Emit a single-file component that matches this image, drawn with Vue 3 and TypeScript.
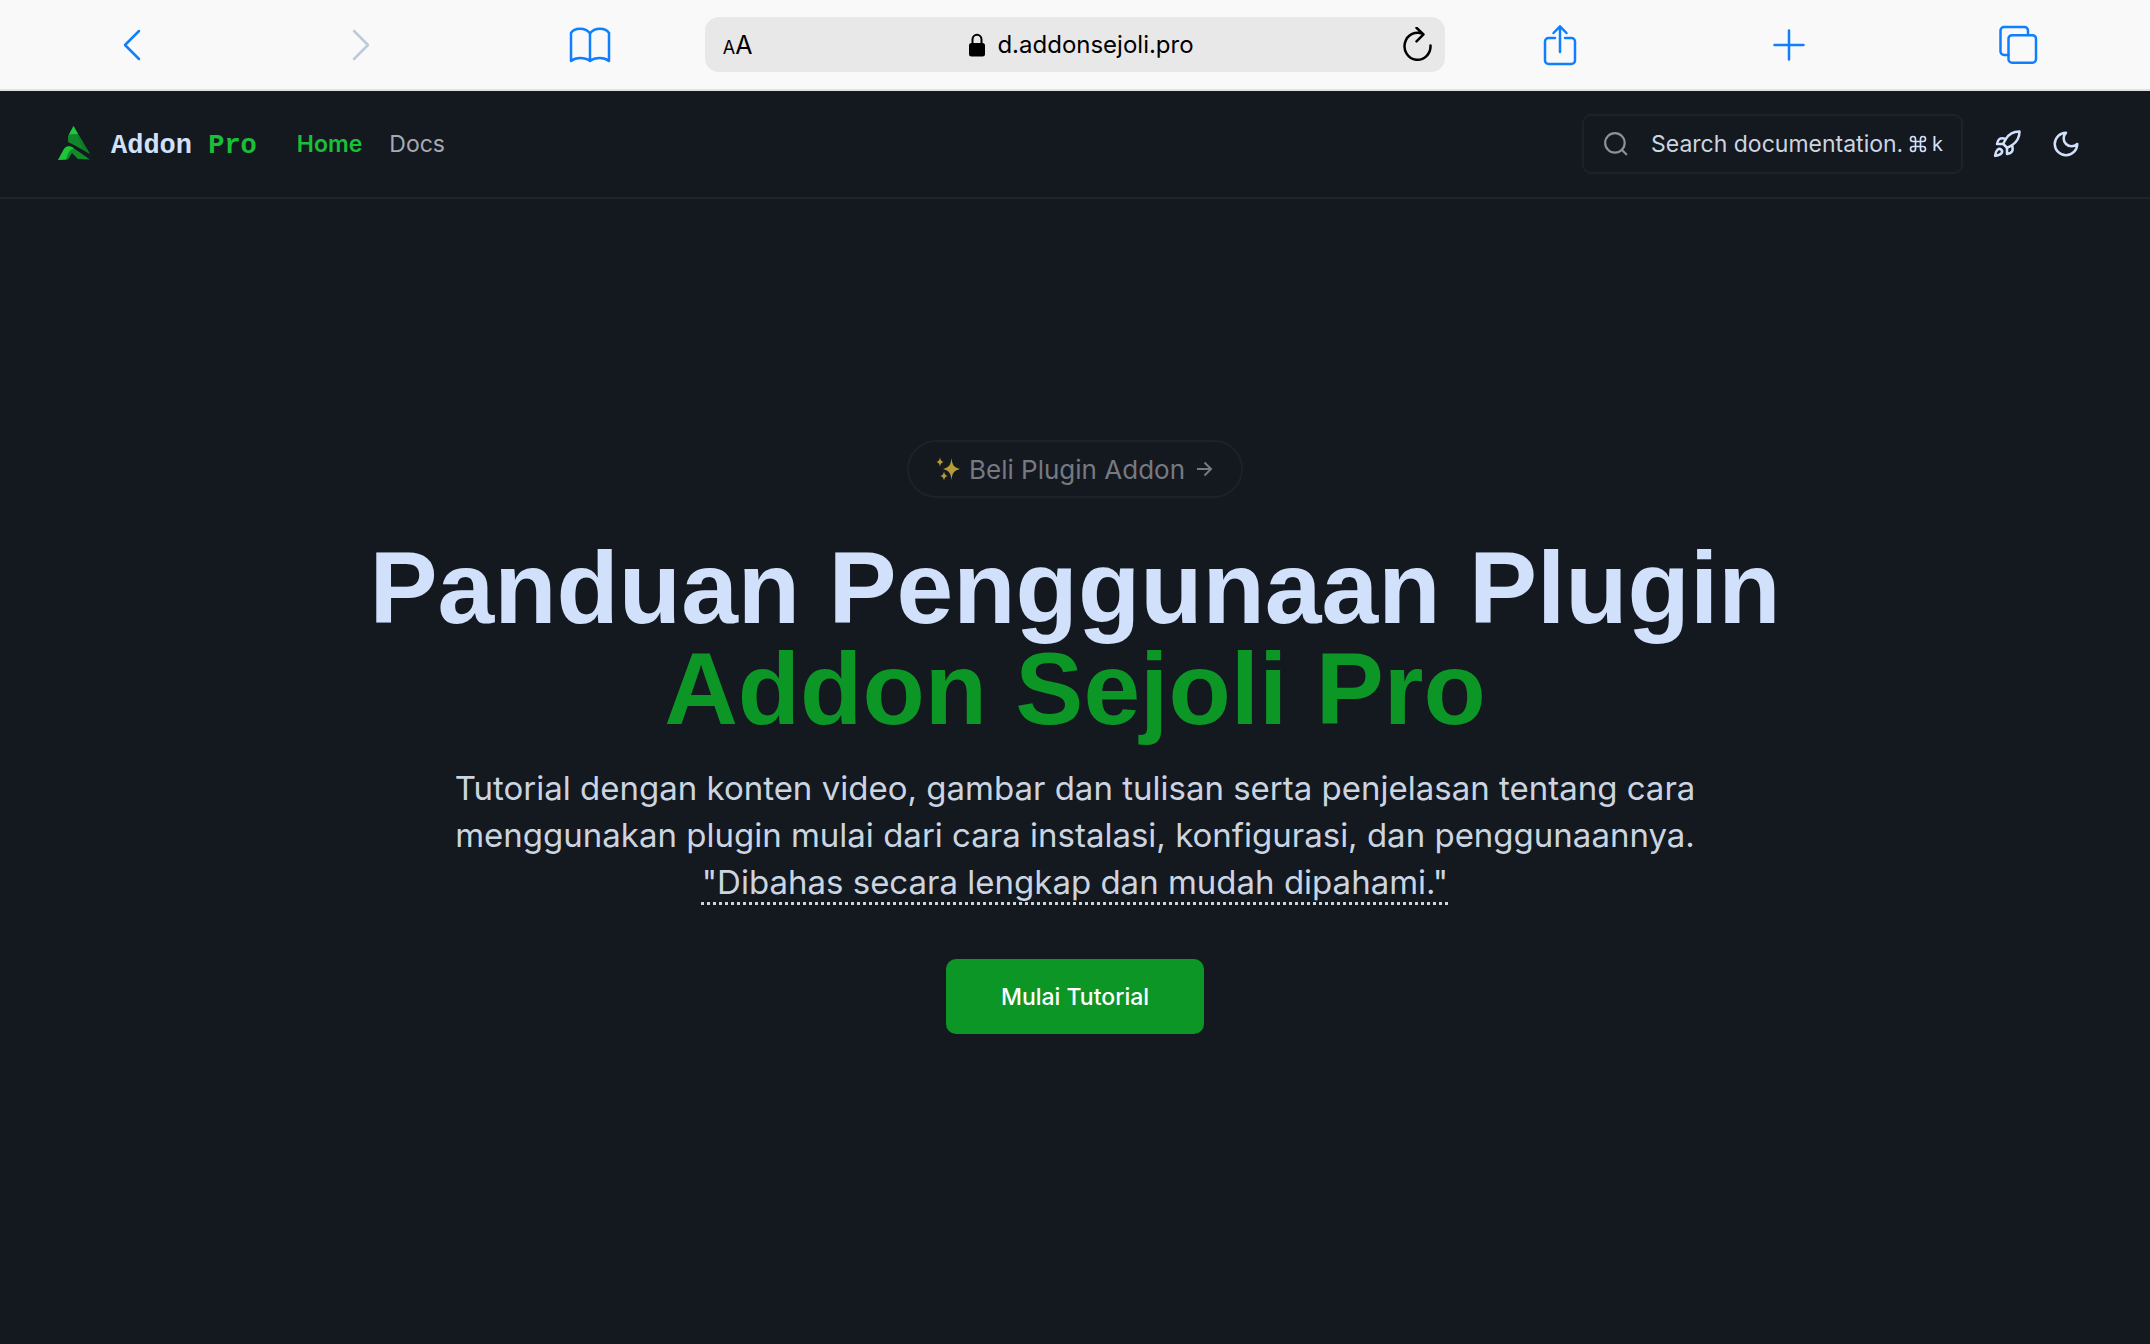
<script setup lang="ts">
interface NavLink {
  label: string
  href: string
  active: boolean
}

const links: NavLink[] = [
  { label: 'Home', href: '#home', active: true },
  { label: 'Docs', href: '#docs', active: false },
]
</script>

<template>
  <div class="browser">
    <div class="toolbar">
      <button class="tool" aria-label="Back">
        <svg width="20" height="34" viewBox="0 0 20 34"><path d="M17 3 3 17l14 14" /></svg>
      </button>
      <button class="tool muted" aria-label="Forward">
        <svg width="20" height="34" viewBox="0 0 20 34"><path d="m3 3 14 14L3 31" /></svg>
      </button>
      <button class="tool" aria-label="Bookmarks">
        <svg width="42" height="36" viewBox="0 0 42 36">
          <path d="M21 6.500C18.500 3 15 1.800 11 1.800S3.500 3.500 2 6v28c2.500-2 5.500-3 9-3s7.500 1 10 3c2.500-2 6.500-3 10-3s6.500 1 9 3V6c-1.500-2.500-5-4.200-9-4.200S23.500 3 21 6.500zV34" />
        </svg>
      </button>
      <div class="address">
        <button class="reader" aria-label="Page settings"><small>A</small>A</button>
        <div class="site">
          <svg width="18" height="24" viewBox="0 0 18 24">
            <rect x="1" y="10" width="16" height="13.500" rx="2.500" fill="#000" />
            <path d="M4.500 11V6.500a4.500 4.800 0 0 1 9 0V11" fill="none" stroke="#000" stroke-width="2" />
          </svg>
          <span>d.addonsejoli.pro</span>
        </div>
        <button class="reload" aria-label="Reload">
          <svg width="30" height="36" viewBox="0 0 30 36">
            <path d="M27.500 18.500A13 13.500 0 1 1 20 7M13.500 .800l7 6.500-7 7" />
          </svg>
        </button>
      </div>
      <button class="tool" aria-label="Share">
        <svg width="34" height="42" viewBox="0 0 34 42">
          <path d="M12 14H5.500A3.500 3.500 0 0 0 2 17.500v19A3.500 3.500 0 0 0 5.500 40h23a3.500 3.500 0 0 0 3.500-3.500v-19a3.500 3.500 0 0 0-3.500-3.500H22M17 28V2.500M10.500 9 17 2.300 23.500 9" />
        </svg>
      </button>
      <button class="tool" aria-label="New tab">
        <svg width="32" height="32" viewBox="0 0 32 32"><path d="M16 1.500v29M1.500 16h29" /></svg>
      </button>
      <button class="tool" aria-label="Show tabs">
        <svg width="40" height="40" viewBox="0 0 40 40">
          <path d="M10.500 30H6a3.500 3.500 0 0 1-3.500-3.500v-21A3.500 3.500 0 0 1 6 2h20.500A3.500 3.500 0 0 1 30 5.500V10" />
          <rect x="10.500" y="10.200" width="27.500" height="27.500" rx="3.500" />
        </svg>
      </button>
    </div>

    <header class="header">
      <a class="brand" href="#home">
        <svg width="34" height="36" viewBox="0 0 34 36">
          <path d="M16.500 0 11 10v6l6 3L33 28z" fill="#12862a" />
          <path d="M16.500 0 12 8.500l9-.5z" fill="#1cc93a" />
          <path d="M20 8 33 28l-7-5z" fill="#0f7a25" />
          <path d="M1 34 7 23c2-3 5-3.500 8-2l18 12.500-12-.500-6-6-4 6.500z" fill="#118a29" />
          <path d="M1 34 7 23c2-3 5-3.500 8-2l2 1.500c-5 1-6 5-8 11z" fill="#1bc638" />
        </svg>
        <span class="brand-name">Addon <span class="green">Pro</span></span>
      </a>
      <nav class="nav">
        <a v-for="link in links" :key="link.label" :href="link.href" :class="{ active: link.active }">{{ link.label }}</a>
      </nav>
      <div class="tools">
        <label class="search">
          <svg width="26" height="26" viewBox="0 0 24 24"><circle cx="11" cy="11" r="9" /><path d="m21.500 21.500-4-4" /></svg>
          <input type="text" placeholder="Search documentation." aria-label="Search documentation" />
          <kbd>
            <svg width="20" height="20" viewBox="0 0 24 24"><path d="M15 6v12a3 3 0 1 0 3-3H6a3 3 0 1 0 3 3V6a3 3 0 1 0-3 3h12a3 3 0 1 0-3-3" /></svg>
            <span>k</span>
          </kbd>
        </label>
        <button class="icon" aria-label="Launch">
          <svg width="30" height="30" viewBox="0 0 24 24">
            <path d="M4.500 16.500c-1.500 1.260-2 5-2 5s3.740-.500 5-2c.710-.840.700-2.130-.090-2.910a2.180 2.180 0 0 0-2.910-.090z" />
            <path d="m12 15-3-3a22 22 0 0 1 2-3.950A12.880 12.880 0 0 1 22 2c0 2.720-.780 7.500-6 11a22.350 22.350 0 0 1-4 2z" />
            <path d="M9 12H4s.550-3.030 2-4c1.620-1.080 5 0 5 0M12 15v5s3.030-.550 4-2c1.080-1.620 0-5 0-5" />
          </svg>
        </button>
        <button class="icon" aria-label="Toggle theme">
          <svg width="30" height="30" viewBox="0 0 24 24"><path d="M12 3a6 6 0 0 0 9 9 9 9 0 1 1-9-9Z" /></svg>
        </button>
      </div>
    </header>

    <main class="hero">
      <a class="badge" href="#beli">
        <svg width="24" height="26" viewBox="0 0 24 26" fill="#b69b36">
          <path d="M15.500 2c.8 6.500 2 9.500 8.500 11-6.500 1.500-7.700 4.500-8.500 11-.8-6.500-2-9.500-8.500-11 6.500-1.500 7.700-4.500 8.500-11z" />
          <path d="M4 1c.4 3 1 4.300 3.500 5C5 6.700 4.400 8 4 11 3.600 8 3 6.700.5 6 3 5.300 3.600 4 4 1zM8 15c.4 3 1 4.300 3.500 5-2.500.700-3.100 2-3.500 5-.4-3-1-4.300-3.500-5 2.500-.700 3.100-2 3.500-5z" />
        </svg>
        <span>Beli Plugin Addon</span>
        <svg class="arrow" width="20" height="20" viewBox="0 0 20 20"><path d="M3 10h14M10.500 3.500 17 10l-6.500 6.500" /></svg>
      </a>
      <h1>Panduan Penggunaan Plugin<br /><span>Addon Sejoli Pro</span></h1>
      <p>
        Tutorial dengan konten video, gambar dan tulisan serta penjelasan tentang cara<br />
        menggunakan plugin mulai dari cara instalasi, konfigurasi, dan penggunaannya.<br />
        <span class="dotted">"Dibahas secara lengkap dan mudah dipahami."</span>
      </p>
      <a class="cta" href="#tutorial">Mulai Tutorial</a>
    </main>
  </div>
</template>

<style>
body {
  background: #14181f;
}
</style>

<style scoped>
.browser {
  min-height: 100vh;
  background: #14181f;
  color: #d1e0fb;
  font-family: Inter, "Liberation Sans", sans-serif;
}
.browser * {
  box-sizing: border-box;
}
button {
  display: flex;
  align-items: center;
  justify-content: center;
  padding: 0;
  border: 0;
  background: none;
  color: inherit;
  font: inherit;
}
a {
  color: inherit;
  text-decoration: none;
}
svg {
  display: block;
  flex: none;
}

.toolbar {
  display: grid;
  grid-template-columns: repeat(3, 1fr) 35% repeat(3, 1fr);
  align-items: center;
  height: 91px;
  padding: 0 17px;
  border-bottom: 2px solid #e0e1e3;
  background: #f9f9f9;
}
.tool {
  height: 56px;
  color: #0f7fff;
}
.tool svg,
.reload svg {
  fill: none;
  stroke: currentColor;
  stroke-width: 2.500;
  stroke-linecap: round;
  stroke-linejoin: round;
}
.muted {
  color: #bccada;
}
.address {
  display: grid;
  grid-template-columns: 1fr auto 1fr;
  align-items: center;
  height: 55px;
  padding: 0 12px 0 18px;
  border-radius: 14px;
  background: #e8e8e8;
  color: #000;
}
.reader {
  justify-self: start;
  align-items: baseline;
  font-size: 25px;
}
.reader small {
  font-size: 18px;
}
.site {
  display: flex;
  align-items: center;
  gap: 11px;
  padding-left: 6px;
  font-size: 24px;
}
.reload {
  justify-self: end;
}

.header {
  display: flex;
  align-items: center;
  height: 108px;
  padding: 0 69px 0 57px;
  border-bottom: 2px solid #1e232e;
}
.brand {
  display: flex;
  align-items: center;
  gap: 20px;
}
.brand-name {
  padding-top: 3px;
  font-family: "Liberation Mono", monospace;
  font-size: 27px;
  font-weight: 700;
}
.green {
  color: #18c037;
}
.nav {
  display: flex;
  gap: 27px;
  margin-left: 40px;
  color: #a4aab3;
  font-size: 23px;
}
.nav .active {
  color: #18c037;
  font-weight: 600;
}
.tools {
  display: flex;
  align-items: center;
  gap: 29px;
  margin-left: auto;
}
.search {
  display: flex;
  align-items: center;
  width: 381px;
  height: 60px;
  padding: 0 18px 0 19px;
  border: 2px solid #1c212b;
  border-radius: 9px;
}
.search > svg {
  fill: none;
  stroke: #8b919b;
  stroke-width: 2;
  stroke-linecap: round;
}
.search input {
  flex: 1;
  min-width: 0;
  margin-left: 22px;
  padding: 0;
  border: 0;
  outline: 0;
  background: none;
  color: #cbd5e1;
  font-family: inherit;
  font-size: 23px;
}
.search input::placeholder {
  color: #cbd5e1;
  opacity: 1;
}
kbd {
  display: flex;
  align-items: center;
  gap: 4px;
  font-family: inherit;
  font-size: 20px;
}
kbd svg,
.icon svg {
  fill: none;
  stroke: currentColor;
  stroke-width: 2;
  stroke-linecap: round;
  stroke-linejoin: round;
}

.hero {
  display: flex;
  flex-direction: column;
  align-items: center;
  padding-top: 241px;
  text-align: center;
}
.badge {
  display: flex;
  align-items: center;
  gap: 9px;
  height: 58px;
  padding: 0 27px;
  border: 2px solid #1c212b;
  border-radius: 29px;
  color: #757a82;
  font-size: 26px;
}
.arrow {
  fill: none;
  stroke: currentColor;
  stroke-width: 2;
}
h1 {
  margin: 40px 0 0;
  font-family: "Liberation Sans", sans-serif;
  font-size: 102px;
  font-weight: 700;
  line-height: 101px;
}
h1 span {
  color: #0c9626;
}
p {
  margin: 25px 0 0;
  color: #cbd5e1;
  font-size: 33px;
  line-height: 47px;
}
.dotted {
  text-decoration: underline dotted 3px;
  text-decoration-skip-ink: none;
  text-underline-offset: 8px;
}
.cta {
  display: flex;
  align-items: center;
  justify-content: center;
  height: 75px;
  margin-top: 53px;
  padding: 0 55px;
  border-radius: 10px;
  background: #0c9626;
  color: #fff;
  font-size: 23px;
  font-weight: 500;
}
</style>
